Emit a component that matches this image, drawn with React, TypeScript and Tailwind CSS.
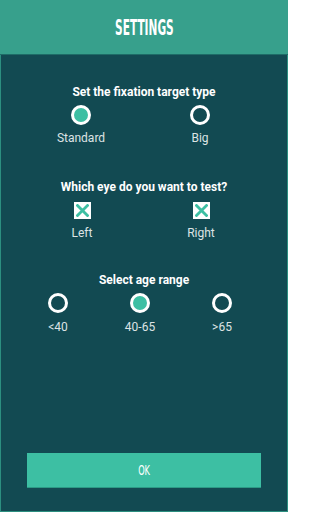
import React, { useState } from "react";

const condensed = { fontFamily: '"Liberation Sans Narrow", "DejaVu Sans Condensed", "Liberation Sans", sans-serif' };

const Radio = ({ checked, onClick }: { checked: boolean; onClick: () => void }) => (
  <button
    onClick={onClick}
    className={`w-[20px] h-[20px] rounded-full border-[3px] border-white ${checked ? "bg-[#3dbfa3]" : "bg-[#124a52]"}`}
  />
);

const CheckBox = ({ checked, onClick }: { checked: boolean; onClick: () => void }) => (
  <button onClick={onClick} className="w-[17px] h-[17px] bg-white flex items-center justify-center">
    {checked && (
      <svg width="13" height="13" viewBox="0 0 13 13">
        <path d="M1.5 1.5 L11.5 11.5 M11.5 1.5 L1.5 11.5" stroke="#3dbfa3" strokeWidth="2.8" strokeLinecap="square" />
      </svg>
    )}
  </button>
);

export default function App() {
  const [target, setTarget] = useState("Standard");
  const [eyes, setEyes] = useState({ Left: true, Right: true });
  const [age, setAge] = useState("40-65");

  return (
    <div
      className="w-[288px] h-[512px] bg-[#124a52] border-x border-b border-[#2c8f80] flex flex-col text-white"
      style={{ fontFamily: 'Roboto, "Liberation Sans", sans-serif' }}
    >
      {/* Header */}
      <div className="h-[55px] -mx-px bg-[#37a08c] border-b border-[#1e6c67] flex items-center justify-center">
        <span className="text-[21px] font-bold leading-none scale-x-[0.56] inline-block mt-[2px]" style={condensed}>
          SETTINGS
        </span>
      </div>

      {/* Fixation target */}
      <div className="mt-[29px] text-center text-[12px] font-bold leading-[16px]">Set the fixation target type</div>
      <div className="flex pl-[40px] gap-[39px] mt-[5px]">
        {["Standard", "Big"].map((t) => (
          <div key={t} className="w-[80px] flex flex-col items-center">
            <Radio checked={target === t} onClick={() => setTarget(t)} />
            <span className="mt-[5px] text-[12px] leading-[16px] text-[#dde3e4]">{t}</span>
          </div>
        ))}
      </div>

      {/* Eyes */}
      <div className="mt-[33px] text-center text-[12px] font-bold leading-[16px]">Which eye do you want to test?</div>
      <div className="flex pl-[41px] gap-[39px] mt-[7px]">
        {(["Left", "Right"] as const).map((e) => (
          <div key={e} className="w-[80px] flex flex-col items-center">
            <CheckBox checked={eyes[e]} onClick={() => setEyes({ ...eyes, [e]: !eyes[e] })} />
            <span className="mt-[6px] text-[12px] leading-[16px] text-[#dde3e4]">{e}</span>
          </div>
        ))}
      </div>

      {/* Age */}
      <div className="mt-[31px] text-center text-[12px] font-bold leading-[16px]">Select age range</div>
      <div className="flex pl-[17px] gap-[2px] mt-[5px]">
        {["<40", "40-65", ">65"].map((a) => (
          <div key={a} className="w-[80px] flex flex-col items-center">
            <Radio checked={age === a} onClick={() => setAge(a)} />
            <span className="mt-[6px] text-[12px] leading-[16px] text-[#dde3e4]">{a}</span>
          </div>
        ))}
      </div>

      {/* OK */}
      <button className="mt-auto mb-[23px] mx-[26px] h-[35px] bg-[#3dbfa3] border-b border-[#2c9a85] flex items-center justify-center">
        <span className="text-[14px] leading-none scale-x-[0.65] inline-block" style={condensed}>
          OK
        </span>
      </button>
    </div>
  );
}
